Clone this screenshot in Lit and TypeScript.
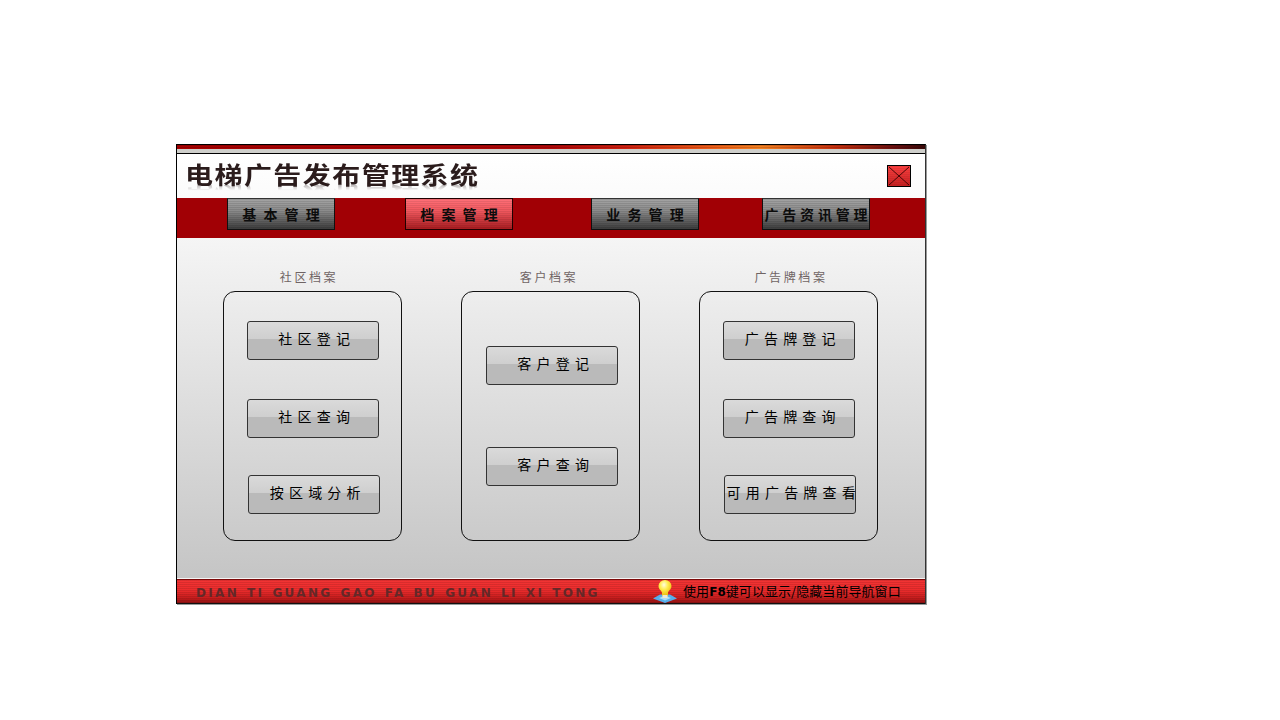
import { LitElement, html, css, svg } from "lit";
import { customElement } from "lit/decorators.js";

@customElement("app-root")
export class AppRoot extends LitElement {
  static styles = css`
    :host { display: block; width: 1280px; height: 720px; background: #fff; overflow: hidden;
      font-family: "Noto Sans CJK SC", "Liberation Sans", sans-serif; }
    .page { padding: 144px 0 0 176px; }
    .win { width: 750px; height: 460px; box-sizing: border-box; border: 1px solid #000; border-right-color: #333; border-bottom: 0;
      display: flex; flex-direction: column; background: #fff; box-shadow: 1px 1px 0 #999; }
    .strip { height: 4px; flex: none;
      background: repeating-linear-gradient(180deg, rgba(0,0,0,.14) 0 1px, rgba(255,255,255,0) 1px 2px),
        linear-gradient(90deg, #a80000 0%, #b00808 50%, #d02010 60%, #f06018 72%, #f58020 78%, #c8300e 88%, #6a1010 96%, #3a0808 100%); }
    .gray { height: 4px; flex: none; background: #cfcfcb; border-bottom: 1px solid #000; box-sizing: content-box; }
    .head { height: 44px; flex: none; display: flex; align-items: flex-start; justify-content: space-between;
      padding: 0 14px 0 8px; background: linear-gradient(180deg, #fff, #fbfbfb); }
    .title { margin: 5px 0 0; font-size: 28px; line-height: 30px; font-weight: 700; letter-spacing: 1.45px; color: #2b1c1c; white-space: nowrap;
      transform: scaleY(.84);
      -webkit-box-reflect: below -5px linear-gradient(transparent 68%, rgba(0,0,0,.45)); }
    .close { width: 24px; height: 22px; margin-top: 11px; box-sizing: border-box; border: 1px solid #000; display: block;
      background: repeating-linear-gradient(180deg, rgba(0,0,0,.06) 0 1px, transparent 1px 2px), linear-gradient(180deg, #fc4040, #c42020); }
    .close svg { display: block; }
    .nav { height: 40px; flex: none; background: #a10005; display: flex; align-items: flex-start; padding-left: 50px; }
    .nav-btn { width: 108px; height: 32px; box-sizing: border-box; border: 1px solid #111; border-top-color: #333; display: flex; align-items: center; justify-content: center;
      font-size: 14px; font-weight: 700; color: #0c0c0c; white-space: nowrap;
      background: repeating-linear-gradient(180deg, rgba(0,0,0,.1) 0 1px, transparent 1px 2px), linear-gradient(180deg, #a4a4a4, #8a8a8a 40%, #3c3c3c); }
    .nav-btn.active { background: repeating-linear-gradient(180deg, rgba(0,0,0,.08) 0 1px, transparent 1px 2px), linear-gradient(180deg, #ff7078, #f0585e 40%, #a81c20); border-color: #1e0000; }
    .sp4 { letter-spacing: 7.1px; text-indent: 7.1px; }
    .sp6 { letter-spacing: 3.8px; text-indent: 3.8px; }
    .n2 { margin-left: 70px; } .n3 { margin-left: 78px; } .n4 { margin-left: 63px; }
    .body { height: 340px; flex: none; box-sizing: border-box; display: flex; padding: 30px 0 0 46px; gap: 59px;
      background: linear-gradient(180deg, #f5f5f5, #c5c5c5); }
    .col { width: 179px; flex: none; }
    .label { height: 23px; line-height: 18px; font-size: 12px; letter-spacing: 2.6px; color: #6f6464; text-align: center; }
    .l1 { padding-right: 7px; } .l2 { padding-right: 3px; } .l3 { padding-left: 5px; }
    .group { height: 250px; box-sizing: border-box; border: 1px solid #111; border-radius: 12px; padding-top: 29px; display: flex; flex-direction: column; align-items: flex-start; }
    .g2 { padding-top: 54px; }
    .btn { width: 132px; height: 39px; box-sizing: border-box; margin: 0 0 39px 23px; flex: none; border: 1px solid #333; border-radius: 3px; padding-bottom: 5px;
      display: flex; align-items: center; justify-content: center; color: #000; font-size: 14px; white-space: nowrap; font-weight: 400;
      letter-spacing: 5.2px; text-indent: 7.5px;
      background: linear-gradient(180deg, #dadada 0, #cfcfcf 45%, #bababa 46%, #bababa 100%); }
    .g1 .btn:nth-child(2), .g3 .btn:nth-child(2) { margin-bottom: 37px; }
    .g1 .btn:nth-child(3), .g3 .btn:nth-child(3) { margin-left: 24px; }
    .g2 .btn { margin-left: 24px; margin-bottom: 62px; }
    .foot-gap { height: 1px; flex: none; background: #f4f4f4; }
    .foot { height: 25px; flex: none; box-sizing: border-box; border-top: 1px solid #7c0808; border-bottom: 1px solid #111; display: flex; align-items: center;
      background: repeating-linear-gradient(180deg, rgba(0,0,0,.1) 0 1px, transparent 1px 2px), linear-gradient(180deg, #f23434 0, #ec2c2c 45%, #c31c1c 80%, #8f1212); }
    .pinyin { margin-left: 19px; width: 457px; flex: none; padding-top: 2px; font-family: "DejaVu Sans", sans-serif; font-weight: 700; font-size: 12px; line-height: 14px; letter-spacing: 2.33px; word-spacing: 1.5px; color: #642828; white-space: nowrap; }
    .bulb { width: 24px; height: 23px; flex: none; display: block; margin-right: 6px; }
    .tip { font-size: 13px; line-height: 16px; color: #000; white-space: nowrap; letter-spacing: .06px; }
    .tip b { font-family: "DejaVu Sans", sans-serif; font-size: 12px; }
  `;

  private bulb() {
    return svg`<defs>
      <radialGradient id="bg" cx=".42" cy=".3" r=".75"><stop offset="0" stop-color="#fffde0"/><stop offset=".4" stop-color="#ffee50"/><stop offset="1" stop-color="#e8b400"/></radialGradient>
    </defs>
    <path d="M0 18.500 L7 14.500 L17 14.500 L24 18.500 L12 23 Z" fill="#55aeea"/>
    <path d="M6 18 L12 20.500 L18 18 L12 15.500 Z" fill="#a8dcfa"/>
    <path d="M9 16 h6 v-3 c0-2 3.500-3.500 3.500-7 a6.500 6 0 0 0-13 0 c0 3.500 3.500 5 3.500 7 Z" fill="url(#bg)"/>
    <rect x="9.500" y="15" width="5" height="3" fill="#ecead2"/>`;
  }

  render() {
    return html`<div class="page"><div class="win">
      <div class="strip"></div>
      <div class="gray"></div>
      <div class="head">
        <h1 class="title">电梯广告发布管理系统</h1>
        <div class="close"><svg width="22" height="20" viewBox="0 0 22 20"><path d="M1 1 L21 19 M21 1 L1 19" stroke="#3a0000" stroke-width=".9" fill="none"/></svg></div>
      </div>
      <div class="nav">
        <div class="nav-btn sp4">基本管理</div>
        <div class="nav-btn active sp4 n2">档案管理</div>
        <div class="nav-btn sp4 n3">业务管理</div>
        <div class="nav-btn sp6 n4">广告资讯管理</div>
      </div>
      <div class="body">
        <div class="col">
          <div class="label l1">社区档案</div>
          <div class="group g1">
            <div class="btn">社区登记</div>
            <div class="btn">社区查询</div>
            <div class="btn">按区域分析</div>
          </div>
        </div>
        <div class="col">
          <div class="label l2">客户档案</div>
          <div class="group g2">
            <div class="btn">客户登记</div>
            <div class="btn">客户查询</div>
          </div>
        </div>
        <div class="col">
          <div class="label l3">广告牌档案</div>
          <div class="group g3">
            <div class="btn">广告牌登记</div>
            <div class="btn">广告牌查询</div>
            <div class="btn">可用广告牌查看</div>
          </div>
        </div>
      </div>
      <div class="foot-gap"></div>
      <div class="foot">
        <div class="pinyin">DIAN TI GUANG GAO FA BU GUAN LI XI TONG</div>
        <svg class="bulb" viewBox="0 0 24 23">${this.bulb()}</svg>
        <div class="tip">使用<b>F8</b>键可以显示/隐藏当前导航窗口</div>
      </div>
    </div></div>`;
  }
}
